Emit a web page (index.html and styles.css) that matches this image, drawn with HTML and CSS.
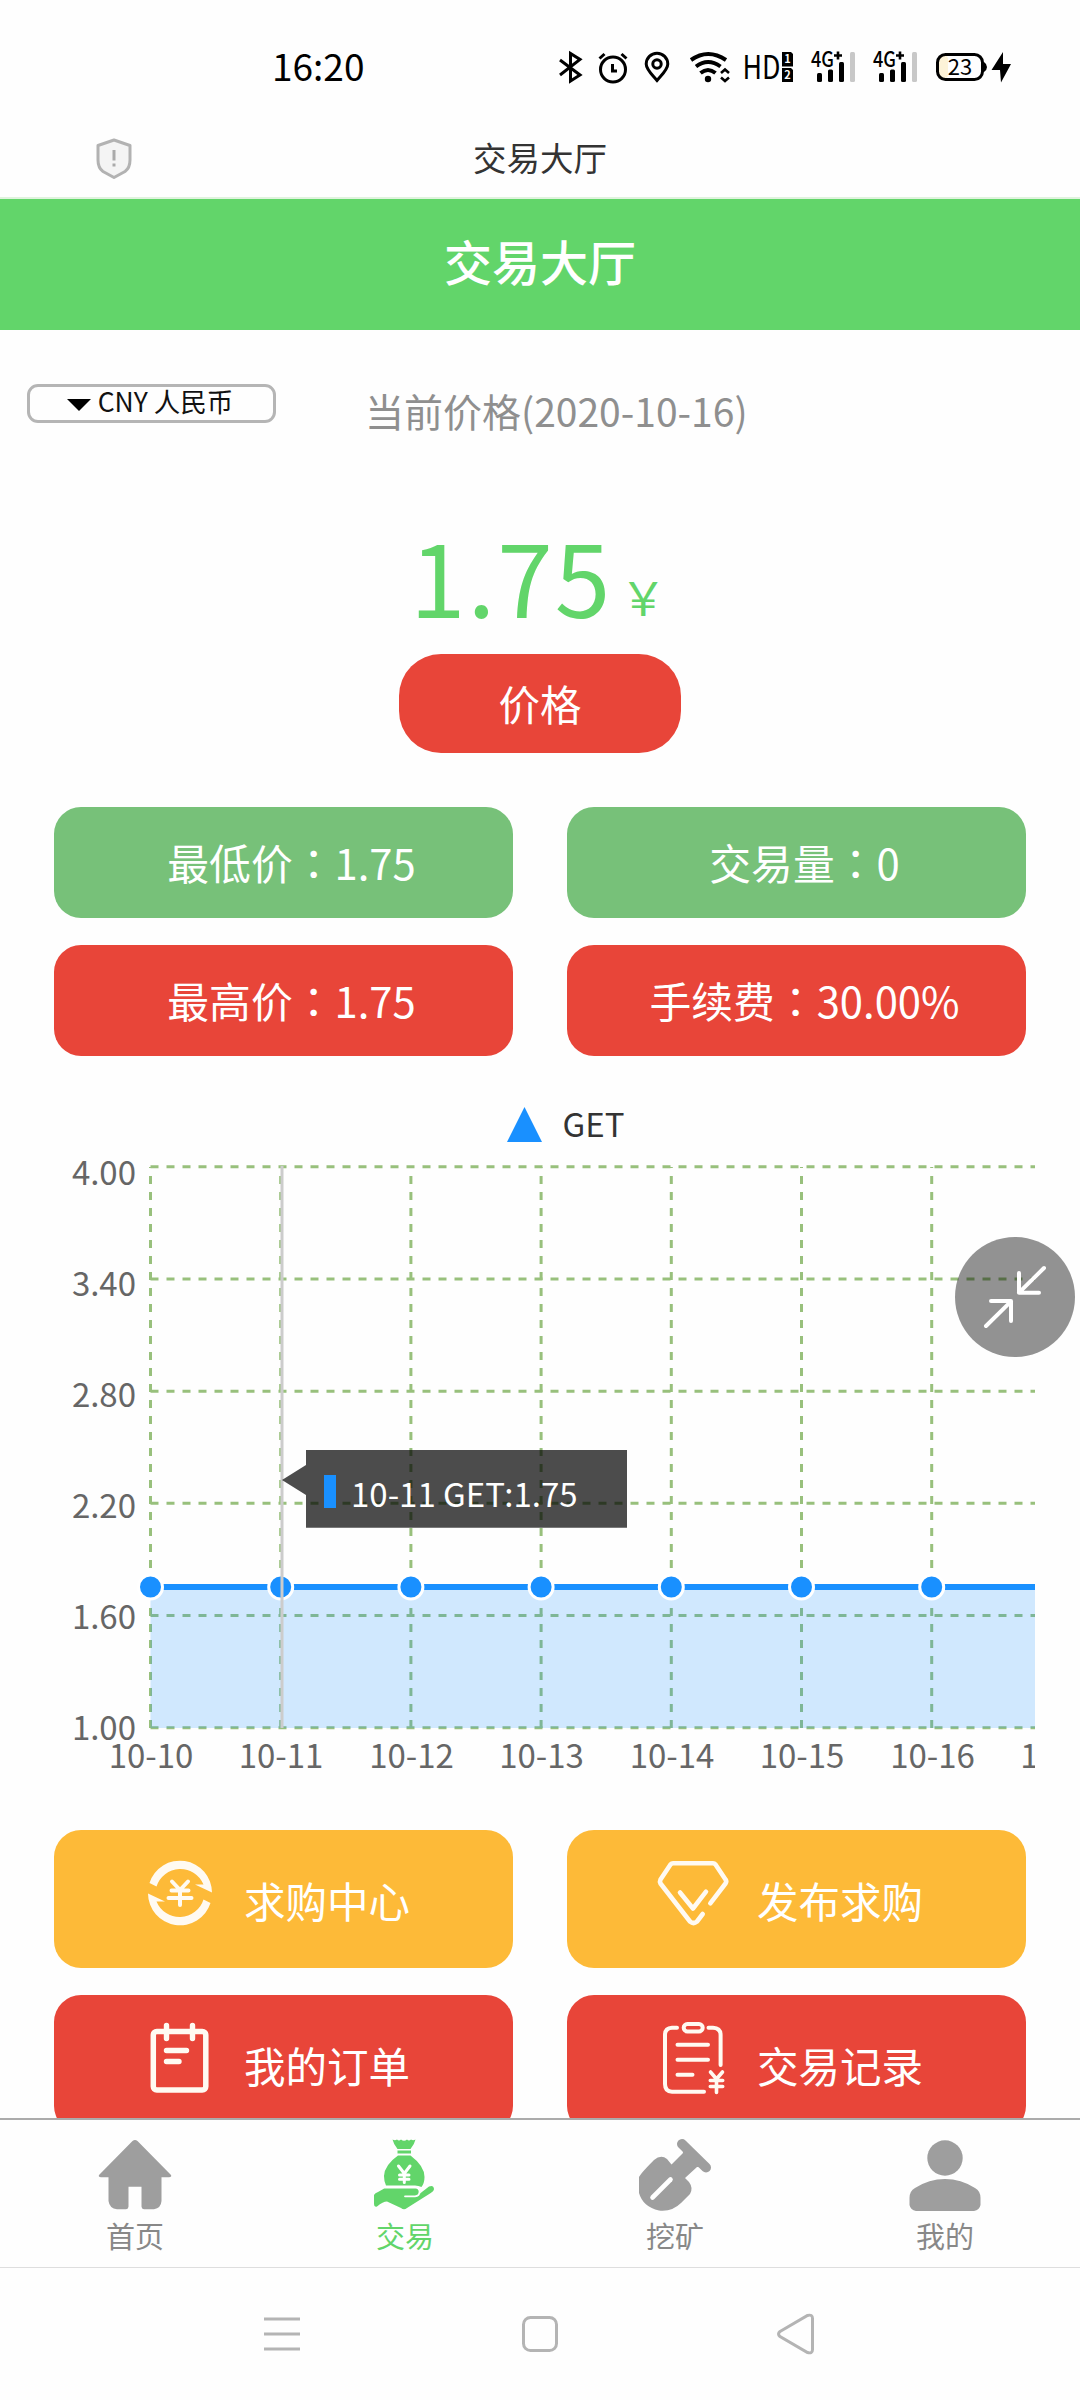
FILE: index.html
```html
<!DOCTYPE html>
<html lang="zh-CN">
<head>
  <meta charset="UTF-8">
  <meta name="viewport" content="width=device-width, initial-scale=1.0">
  <title>交易大厅</title>
  <link rel="stylesheet" href="styles.css">
</head>
<body>
  <div class="status-bar">
    <span class="time">16:20</span>
    <svg class="status-icons" width="460" height="40" viewBox="555 47 460 40">
      <!-- bluetooth -->
      <path class="line" d="M560 60L580 75L570.5 81V53.500L580 59.500L560 75"/>
      <!-- alarm -->
      <circle class="line" cx="613" cy="69.500" r="12.500"/>
      <path class="line" d="M612.500 64V71H617M599.500 58.500L604.500 54M621.500 54L626.500 58.500"/>
      <!-- location -->
      <path class="line" d="M657 80.500C652 74.500 646.200 69.500 646.200 64A10.800 10.800 0 0 1 667.800 64C667.800 69.500 662 74.500 657 80.500Z"/>
      <circle class="line" cx="657" cy="64" r="4.200"/>
      <!-- wifi -->
      <path class="wifi" d="M691 60Q708 48 726 60M696 66.500Q708 57.500 720.500 66.500M700.500 73Q708 67 715.500 73"/>
      <circle cx="708" cy="79" r="3.200"/>
      <path class="thin" d="M721 73L725 69.500L729 73M721 77.500L725 81L729 77.500"/>
      <!-- HD 1 / 2 -->
      <text class="hd" x="742.500" y="79" textLength="38" lengthAdjust="spacingAndGlyphs">HD</text>
      <path d="M782 52H791L793 54V66.500H782ZM782 68H791L793 70V82H782Z"/>
      <text class="sim" x="787.500" y="63.300">1</text>
      <text class="sim" x="787.500" y="79.300">2</text>
      <!-- signal, two sims -->
      <g id="signal">
        <text class="net" x="811" y="66.500" textLength="23" lengthAdjust="spacingAndGlyphs">4G</text>
        <path class="thin" d="M834 55.500H842M838 51.500V59.500"/>
        <rect x="817" y="73" width="5" height="9" rx="1.500"/>
        <rect x="828" y="69.500" width="5" height="12.500" rx="1.500"/>
        <rect x="839" y="62" width="5" height="20" rx="1.500"/>
        <rect class="off" x="850" y="52" width="5" height="30" rx="1.500"/>
      </g>
      <use href="#signal" x="62"/>
      <!-- battery -->
      <rect class="charge" x="939" y="55.500" width="9" height="23" rx="4"/>
      <rect class="line" x="937.500" y="54.500" width="45" height="25" rx="8"/>
      <path d="M984 62Q987 64 987 67Q987 70 984 72Z"/>
      <text class="level" x="960" y="74.500">23</text>
      <path d="M1003 52L991.500 70H1000L1001 82.500L1011 64H1003Z"/>
    </svg>
  </div>

  <div class="title-bar">
    <svg class="shield" width="38" height="42" viewBox="0 0 38 42">
      <path d="M19 2L35 7.500V22Q35 30 30 33.500L19 39.500L8 33.500Q3 30 3 22V7.500Z"/>
      <path class="mark" d="M19 12V22.500M19 25.500V28.500"/>
    </svg>
    <span>交易大厅</span>
  </div>

  <header class="page-header">
    <h1>交易大厅</h1>
  </header>

  <main class="content">
    <div class="top-row">
      <div class="currency">
        <svg width="24" height="12" viewBox="0 0 24 12"><path d="M0 0H24L12 12Z"/></svg>
        <span>CNY 人民币</span>
      </div>
      <div class="date">当前价格(2020-10-16)</div>
    </div>

    <div class="price">
      <span class="amount">1.75</span>
      <span class="unit">￥</span>
    </div>
    <div class="price-btn">价格</div>

    <div class="stats">
      <div class="stat green">最低价<i lang="zh-TW">：</i>1.75</div>
      <div class="stat green">交易量<i lang="zh-TW">：</i>0</div>
      <div class="stat red">最高价<i lang="zh-TW">：</i>1.75</div>
      <div class="stat red">手续费<i lang="zh-TW">：</i>30.00%</div>
    </div>

    <svg class="chart" width="1080" height="774" viewBox="0 1056 1080 774">
      <defs>
        <clipPath id="plot"><rect x="90" y="1140" width="945" height="660"/></clipPath>
      </defs>
      <path class="series-fill" d="M507 1142L524.500 1107L542 1142Z"/>
      <text class="legend" x="562.500" y="1136.500">GET</text>

      <g class="grid">
        <path d="M150.500 1166.700H1035M150.500 1279H1035M150.500 1391.300H1035M150.500 1503.300H1035M150.500 1615.500H1035M150.500 1727.700H1035"/>
        <path d="M150.500 1728V1167M280.700 1728V1167M410.900 1728V1167M541.100 1728V1167M671.300 1728V1167M801.500 1728V1167M931.700 1728V1167"/>
      </g>

      <g class="axis y-axis">
        <text x="136" y="1185">4.00</text>
        <text x="136" y="1296">3.40</text>
        <text x="136" y="1407">2.80</text>
        <text x="136" y="1518">2.20</text>
        <text x="136" y="1629">1.60</text>
        <text x="136" y="1740">1.00</text>
      </g>

      <g clip-path="url(#plot)">
        <g class="axis x-axis">
          <text x="151" y="1768">10-10</text>
          <text x="281" y="1768">10-11</text>
          <text x="411.500" y="1768">10-12</text>
          <text x="541.500" y="1768">10-13</text>
          <text x="672" y="1768">10-14</text>
          <text x="802" y="1768">10-15</text>
          <text x="932.500" y="1768">10-16</text>
          <text x="1062.500" y="1768">10-17</text>
        </g>
        <rect class="area" x="150.500" y="1587" width="885" height="141"/>
        <path class="series-line" d="M150.500 1587H1035"/>
        <g class="points">
          <circle cx="150.500" cy="1587" r="12"/>
          <circle cx="280.700" cy="1587" r="12"/>
          <circle cx="410.900" cy="1587" r="12"/>
          <circle cx="541.100" cy="1587" r="12"/>
          <circle cx="671.300" cy="1587" r="12"/>
          <circle cx="801.500" cy="1587" r="12"/>
          <circle cx="931.700" cy="1587" r="12"/>
        </g>
      </g>

      <path class="cursor" d="M282 1166V1728"/>
      <path class="tip-bg" d="M282 1480L306 1465V1450H627V1527.700H306V1495Z"/>
      <rect class="series-fill" x="324" y="1475" width="12" height="33"/>
      <text class="tip-text" x="351" y="1506.500">10-11 GET:1.75</text>
    </svg>

    <div class="actions">
      <div class="action yellow">
        <svg width="72" height="72" viewBox="0 0 72 72">
          <path id="arc" class="solid" d="M5.500 26A32 32 0 0 1 68 35.500L51 27.500L59.500 27.500A25 25 0 0 0 12.500 29.500Z"/>
          <use href="#arc" transform="rotate(180 36 36)"/>
          <path stroke-width="4" d="M28 24.500L36 33L44 24.500M36 33V48M27.500 33.500H44.500M24.500 41H47.500"/>
        </svg>
        <span>求购中心</span>
      </div>
      <div class="action yellow">
        <svg width="72" height="72" viewBox="0 0 72 72">
          <path stroke-width="4.600" d="M53.300 46.300L68.500 26.500Q70 24.500 68.500 22.500L58.500 7.500Q57.500 6.300 56 6.300H16Q14.500 6.300 13.500 7.500L3.500 22.500Q2.500 24.500 3.500 26.500L33 64.500Q36.500 67.500 40 64.500L45.700 57M23 35.500L36 51.500L49 34.700"/>
        </svg>
        <span>发布求购</span>
      </div>
      <div class="action red">
        <svg width="72" height="72" viewBox="0 0 72 72">
          <rect x="9.300" y="9.500" width="52.500" height="58.500" rx="3.500" stroke-width="5.500"/>
          <path stroke-width="5.400" d="M22.500 3.500V16.500M48.500 3.500V16.500M22.500 28.500H42.500M22.500 39.500H35"/>
        </svg>
        <span>我的订单</span>
      </div>
      <div class="action red">
        <svg width="72" height="72" viewBox="0 0 72 72">
          <rect x="26.700" y="2" width="19" height="7.500" rx="3.700" stroke-width="4"/>
          <path stroke-width="4" d="M20 5.700H15Q8 6 8 13V62Q8 69.700 15 69.700H47M51.500 5.700H56Q63.600 6 63.600 13V43M20.500 22.700H51M20.500 37.700H51M20.500 52.700H35.500"/>
          <path stroke-width="3.600" d="M53.500 50L59.500 57L65.500 50M59.500 57V70.500M53.300 58.500H65.700M53.300 64.500H65.700"/>
        </svg>
        <span>交易记录</span>
      </div>
    </div>

    <div class="shrink-btn">
      <svg width="120" height="120" viewBox="955 1237 120 120">
        <path d="M1044 1268L1019 1292.700M1019 1273V1292.700H1039M986 1326L1011 1301.300M991 1301H1011V1321"/>
      </svg>
    </div>
  </main>

  <nav class="tab-bar">
    <div class="tab">
      <svg width="74" height="74" viewBox="-1 0 74 74">
        <path d="M33.500 2Q36 0 38.500 2L72 36Q73 38 70 38.300H62.500V62Q62 69 55 70.300H45Q42.500 70 42.500 67.500V47.700H29.500V67.500Q29.500 70 27 70.300H18Q10.500 69.500 9.500 62V38.300H2Q-1 38 0 36Z"/>
      </svg>
      <span>首页</span>
    </div>
    <div class="tab active">
      <svg width="74" height="74" viewBox="-1 0 74 74">
        <path d="M23.500 0.500Q26 2 28 0.500Q30 2.500 32 0.500Q35 3 38 0.500Q40 2.500 42 0.500Q44 2 46.500 0.500Q45.500 5 41.500 10H28.500Q24.500 5 23.500 0.500ZM28.500 11.500H42V14.500H28.500ZM29 16.500H41.500Q55.500 27 55.500 38Q55.500 44 52.500 48Q49.500 46.500 46 46.500H17Q15 43 15 37Q15.500 26 29 16.500Z"/>
        <path d="M5 56Q6 54 9 53L17 48.500H47Q52 49.500 51 54.500L60 47.500Q64.500 45.500 65 50Q65 52 61 54.500L38 69Q35 71.500 32 69L18 62.500Q14 62.500 8 67.500Q5 68.500 5 65Z"/>
        <path class="cut" stroke-width="1.800" d="M36 57.300H46C52 57 52 48.500 46.500 48.500H16"/>
        <path class="cut" stroke-width="3" d="M29.500 27L35.300 34.500L41 27M35.300 34.500V43.500M30.500 36H40M30.500 40.300H40"/>
      </svg>
      <span>交易</span>
    </div>
    <div class="tab">
      <svg width="74" height="74" viewBox="-1 0 74 74">
        <path d="M15 21Q22 15 28 20L32.500 25.500L44 14L43 5L67 28.500L58 28L46 39L50 43Q54.500 49 51 55L42 64Q33 73 20 71.500Q4 68 0 54V38Q2 34 15 21Z"/>
        <path class="stem" stroke-width="10" d="M43 5L67 28.500"/>
        <path class="cut" stroke-width="4.600" d="M31.500 40.500L13.500 58.500"/>
      </svg>
      <span>挖矿</span>
    </div>
    <div class="tab">
      <svg width="74" height="74" viewBox="0 0 74 74">
        <circle cx="37" cy="19" r="17.700"/>
        <path d="M1.500 59Q1.500 52 7 49Q21 40 37 40Q53 40 67 49Q72.500 52 72.500 59V66Q71.500 71 66 72H8Q2.500 71 1.500 66Z"/>
      </svg>
      <span>我的</span>
    </div>
  </nav>

  <div class="system-nav">
    <svg width="36" height="42" viewBox="0 0 36 42"><path d="M0 6H36M0 21H36M0 36H36"/></svg>
    <svg width="36" height="42" viewBox="0 0 36 42"><rect x="1.500" y="4.500" width="33" height="33" rx="7"/></svg>
    <svg width="36" height="42" viewBox="0 0 36 42"><path d="M1 18.500L28.500 2.500Q33.500 1 33.500 5.500V36.500Q33.500 41 28.500 39.500L1 23.500Q-2 21 1 18.500Z"/></svg>
  </div>
</body>
</html>
```
FILE: styles.css
```css
* {
  margin: 0;
  padding: 0;
  box-sizing: border-box;
}

body {
  width: 1080px;
  height: 2400px;
  display: flex;
  flex-direction: column;
  overflow: hidden;
  background: #fefefe;
  font-family: "Noto Sans CJK SC", "Noto Sans", sans-serif;
}

svg {
  display: block;
  flex: none;
  overflow: visible;
}

/* system status bar */
.status-bar {
  height: 116px;
  padding: 18px 65px 0 272px;
  display: flex;
  align-items: center;
  justify-content: space-between;
}

.time {
  font-size: 37px;
  line-height: 40px;
  padding-bottom: 5px;
  color: #000;
}

.status-icons .line,
.status-icons .wifi,
.status-icons .thin {
  fill: none;
  stroke: #000;
  stroke-width: 3;
}

.status-icons .wifi { stroke-width: 4; }
.status-icons .thin { stroke-width: 2.6; }
.status-icons .off { fill: #c8c8c8; }
.status-icons .charge { fill: #fdf3d8; }
.hd { font-size: 33px; }
.net { font-size: 21px; font-weight: 500; }

.sim {
  font-size: 11px;
  font-weight: 700;
  fill: #fff;
  text-anchor: middle;
}

.level {
  font-size: 22px;
  text-anchor: middle;
}

.title-bar {
  height: 83px;
  padding-left: 95px;
  border-bottom: 2px solid #dff3dd;
  display: grid;
  grid-template-columns: 38px 1fr 133px;
  align-items: center;
  text-align: center;
  font-size: 33.5px;
  line-height: 40px;
  color: #333;
}

.shield {
  margin-top: 5px;
  fill: #f4f4f4;
  stroke: #b2b2b2;
  stroke-width: 3;
  stroke-linejoin: round;
}

.shield .mark { stroke: #aaa; }

.page-header {
  height: 131px;
  padding-bottom: 9px;
  display: flex;
  align-items: center;
  justify-content: center;
  background: #62d56a;
}

.page-header h1 {
  font-size: 48px;
  line-height: 60px;
  font-weight: 500;
  color: #fff;
}

/* scrolling page, cut off by the tab bar */
.content {
  position: relative;
  height: 1788px;
  overflow: hidden;
}

.top-row {
  height: 194px;
  padding: 54px 0 0 27px;
  display: flex;
  align-items: flex-start;
  gap: 90px;
}

.currency {
  width: 249px;
  height: 39px;
  display: flex;
  align-items: center;
  justify-content: center;
  gap: 7px;
  padding-right: 3px;
  border: 3px solid #b5b5b5;
  border-radius: 11px;
  font-size: 26.5px;
  line-height: 32px;
  color: #111;
}

.currency span { padding-bottom: 5px; }
.currency svg { margin-top: 3px; }

.date {
  margin-left: -1px;
  padding-top: 6px;
  font-size: 39px;
  line-height: 40px;
  color: #8f8f8f;
}

.price {
  height: 100px;
  padding: 1px 0 0 410px;
  display: flex;
  align-items: baseline;
  gap: 8px;
  color: #62d56a;
}

.amount {
  font-size: 100px;
  line-height: 100px;
  letter-spacing: 2px;
}

.unit {
  font-size: 46px;
  line-height: 57px;
  align-self: flex-end;
}

.price-btn {
  width: 282px;
  height: 99px;
  margin: 30px auto 54px;
  border-radius: 42px;
  background: #e84539;
  font-size: 41.5px;
  line-height: 99px;
  text-align: center;
  color: #fff;
}

.stats,
.actions {
  padding: 0 54px;
  display: grid;
  grid-template-columns: 1fr 1fr;
  gap: 27px 54px;
}

.stat {
  height: 111px;
  padding-left: 16px;
  border-radius: 27px;
  font-size: 41.8px;
  line-height: 111px;
  text-align: center;
  color: #fff;
}

/* keeps the colon in the middle of its box */
.stat i {
  font-style: normal;
  font-family: "Noto Sans CJK TC", sans-serif;
}

.green { background: #77c179; }
.red { background: #e84539; }
.yellow { background: #fdba38; }

/* price chart */
.chart text { font-size: 33px; }
.chart .legend { fill: #333; }
.chart .axis { fill: #666; }
.y-axis { text-anchor: end; }
.x-axis { text-anchor: middle; }

.grid {
  stroke: #98c07c;
  stroke-width: 3;
  stroke-dasharray: 8 8;
}

.series-fill { fill: #1990ff; }

.area {
  fill: #1990ff;
  opacity: 0.2;
}

.series-line {
  stroke: #1990ff;
  stroke-width: 6;
}

.points {
  fill: #1990ff;
  stroke: #fff;
  stroke-width: 3;
}

.cursor {
  stroke: #ccc;
  stroke-width: 3;
}

.tip-bg { fill: rgba(0, 0, 0, 0.7); }
.tip-text { fill: #fff; }

.action {
  height: 138px;
  padding-left: 90px;
  border-radius: 27px;
  display: flex;
  align-items: center;
  gap: 28px;
  font-size: 41.5px;
  line-height: 60px;
  color: #fff;
}

.action span { padding-top: 2px; }

.action svg {
  margin-top: -12px;
  fill: none;
  stroke: #fffaf2;
  stroke-linecap: round;
  stroke-linejoin: round;
}

.action .solid {
  fill: #fffaf2;
  stroke: none;
}

.shrink-btn {
  position: absolute;
  top: 907px;
  left: 955px;
  width: 120px;
  height: 120px;
  border-radius: 50%;
  background: rgba(0, 0, 0, 0.425);
}

.shrink-btn path {
  fill: none;
  stroke: #fff;
  stroke-width: 4;
  stroke-linecap: round;
  stroke-linejoin: round;
}

/* bottom tabs */
.tab-bar {
  height: 149px;
  border-top: 2px solid #ababab;
  display: grid;
  grid-template-columns: repeat(4, 1fr);
}

.tab {
  padding-top: 19px;
  display: flex;
  flex-direction: column;
  align-items: center;
  gap: 6px;
  font-size: 29px;
  line-height: 32px;
  color: #888;
}

.tab svg { fill: #9e9e9e; }
.tab.active { color: #62d56a; }
.tab.active svg { fill: #62d56a; }

.tab .cut,
.tab .stem {
  fill: none;
  stroke: #fff;
  stroke-linecap: round;
}

.tab .stem { stroke: #9e9e9e; }

.system-nav {
  flex: 1;
  padding: 45px 265px 0 264px;
  border-top: 1px solid #dedede;
  display: flex;
  justify-content: space-between;
}

.system-nav svg {
  fill: none;
  stroke: #b4b4b4;
  stroke-width: 3;
}
```
